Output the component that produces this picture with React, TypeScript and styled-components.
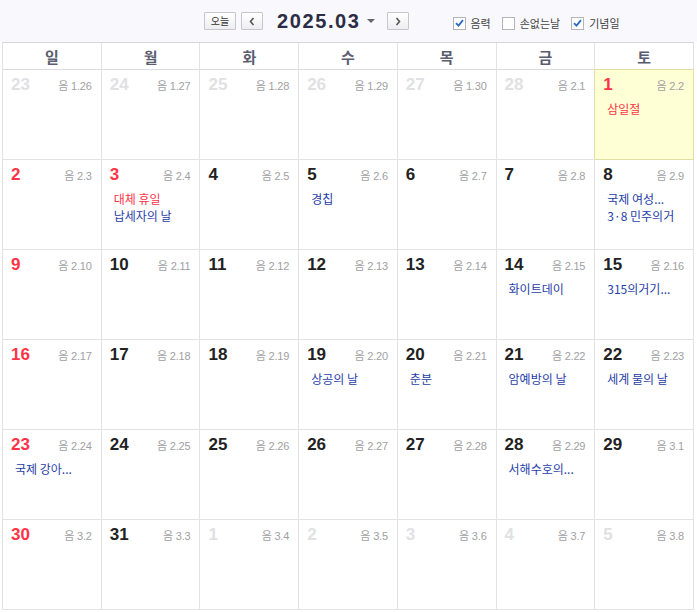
import React from "react";
import styled, { createGlobalStyle } from "styled-components";

const Global = createGlobalStyle`
  html, body { margin: 0; padding: 0; background: #fff; }
  body { font-family: "Liberation Sans", "Noto Sans CJK KR", sans-serif; }
`;

const Page = styled.div`
  width: 697px;
  height: 612px;
  background: #fff;
  display: flex;
  flex-direction: column;
`;

const Toolbar = styled.div`
  height: 42px;
  background: #f9f8fc;
  display: flex;
  align-items: center;
  padding-left: 204px;
  box-sizing: border-box;
`;

const NavGroup = styled.div`
  display: flex;
  align-items: center;
`;

const SmallButton = styled.button<{ $w: number; $ml?: number }>`
  width: ${(p) => p.$w}px;
  height: 18px;
  margin-left: ${(p) => p.$ml ?? 0}px;
  padding: 0;
  border: 1px solid #c6c6cc;
  border-radius: 1px;
  background: linear-gradient(#ffffff, #eeeef1);
  color: #333;
  font-family: "Noto Sans CJK KR", sans-serif;
  font-size: 10px;
  line-height: 16px;
  display: flex;
  align-items: center;
  justify-content: center;
  box-sizing: border-box;
`;

const Title = styled.div`
  margin-left: 14px;
  font-family: "Liberation Sans", sans-serif;
  font-weight: 700;
  font-size: 20px;
  letter-spacing: 1.6px;
  color: #2a2d44;
  display: flex;
  align-items: center;
`;

const Caret = styled.span`
  margin-left: 6px;
  margin-right: 12px;
  width: 0;
  height: 0;
  border-left: 4px solid transparent;
  border-right: 4px solid transparent;
  border-top: 4px solid #666;
`;

const CheckGroup = styled.div`
  display: flex;
  align-items: center;
  margin-left: 44px;
  margin-top: 4px;
`;

const CheckItem = styled.label`
  display: flex;
  align-items: center;
  margin-right: 11px;
  font-family: "Noto Sans CJK KR", sans-serif;
  font-size: 11px;
  color: #444;
`;

const Box = styled.span`
  width: 13px;
  height: 13px;
  box-sizing: border-box;
  border: 1px solid #b4b4ba;
  background: #fff;
  margin-right: 5px;
  display: flex;
  align-items: center;
  justify-content: center;
`;

const Calendar = styled.div`
  margin: 0 3px 0 2px;
  border-left: 1px solid #e3e3e6;
  border-top: 1px solid #d6d6db;
  display: grid;
  grid-template-columns: repeat(7, 1fr);
  grid-template-rows: 27px repeat(6, 90px);
  gap: 0;
`;

const HeadCell = styled.div`
  border-right: 1px solid #e3e3e6;
  border-bottom: 1px solid #dcdce0;
  display: flex;
  align-items: center;
  justify-content: center;
  font-family: "Noto Sans CJK KR", sans-serif;
  font-weight: 700;
  font-size: 15px;
  color: #5a5d6f;
`;

const DayCell = styled.div<{ $hl?: boolean }>`
  position: relative;
  border-right: 1px solid ${(p) => (p.$hl ? "#e2dea4" : "#e3e3e6")};
  border-bottom: 1px solid ${(p) => (p.$hl ? "#e2dea4" : "#e3e3e6")};
  background: ${(p) => (p.$hl ? "#ffffd6" : "#fff")};
  box-shadow: ${(p) => (p.$hl ? "-1px -1px 0 0 #e2dea4" : "none")};
  padding: 5px 9px 0 8px;
  display: flex;
  flex-direction: column;
  min-width: 0;
`;

const TopLine = styled.div`
  display: flex;
  justify-content: space-between;
  align-items: center;
  height: 20px;
`;

const DayNum = styled.span<{ $tone: "red" | "dim" | "normal" }>`
  font-family: "Liberation Sans", sans-serif;
  font-weight: 700;
  font-size: 17px;
  color: ${(p) => (p.$tone === "red" ? "#ff3347" : p.$tone === "dim" ? "#e1e1e3" : "#222")};
`;

const Lunar = styled.span`
  font-family: "Liberation Sans", "Noto Sans CJK KR", sans-serif;
  font-size: 11px;
  color: #a0a0a4;
  letter-spacing: -0.2px;
`;

const Events = styled.div`
  margin-top: 5px;
  padding-left: 4px;
  display: flex;
  flex-direction: column;
`;

const EventText = styled.div<{ $red?: boolean }>`
  font-family: "Noto Sans CJK KR", sans-serif;
  font-size: 12px;
  line-height: 17px;
  white-space: nowrap;
  color: ${(p) => (p.$red ? "#ff3347" : "#1f3ea8")};
`;

type Ev = { t: string; red?: boolean };
type Day = { d: number; l: string; tone: "red" | "dim" | "normal"; ev?: Ev[]; hl?: boolean };

const R = "red" as const;
const D = "dim" as const;
const N = "normal" as const;

const days: Day[] = [
  { d: 23, l: "1.26", tone: D },
  { d: 24, l: "1.27", tone: D },
  { d: 25, l: "1.28", tone: D },
  { d: 26, l: "1.29", tone: D },
  { d: 27, l: "1.30", tone: D },
  { d: 28, l: "2.1", tone: D },
  { d: 1, l: "2.2", tone: R, hl: true, ev: [{ t: "삼일절", red: true }] },

  { d: 2, l: "2.3", tone: R },
  { d: 3, l: "2.4", tone: R, ev: [{ t: "대체 휴일", red: true }, { t: "납세자의 날" }] },
  { d: 4, l: "2.5", tone: N },
  { d: 5, l: "2.6", tone: N, ev: [{ t: "경칩" }] },
  { d: 6, l: "2.7", tone: N },
  { d: 7, l: "2.8", tone: N },
  { d: 8, l: "2.9", tone: N, ev: [{ t: "국제 여성..." }, { t: "3·8 민주의거" }] },

  { d: 9, l: "2.10", tone: R },
  { d: 10, l: "2.11", tone: N },
  { d: 11, l: "2.12", tone: N },
  { d: 12, l: "2.13", tone: N },
  { d: 13, l: "2.14", tone: N },
  { d: 14, l: "2.15", tone: N, ev: [{ t: "화이트데이" }] },
  { d: 15, l: "2.16", tone: N, ev: [{ t: "315의거기..." }] },

  { d: 16, l: "2.17", tone: R },
  { d: 17, l: "2.18", tone: N },
  { d: 18, l: "2.19", tone: N },
  { d: 19, l: "2.20", tone: N, ev: [{ t: "상공의 날" }] },
  { d: 20, l: "2.21", tone: N, ev: [{ t: "춘분" }] },
  { d: 21, l: "2.22", tone: N, ev: [{ t: "암예방의 날" }] },
  { d: 22, l: "2.23", tone: N, ev: [{ t: "세계 물의 날" }] },

  { d: 23, l: "2.24", tone: R, ev: [{ t: "국제 강아..." }] },
  { d: 24, l: "2.25", tone: N },
  { d: 25, l: "2.26", tone: N },
  { d: 26, l: "2.27", tone: N },
  { d: 27, l: "2.28", tone: N },
  { d: 28, l: "2.29", tone: N, ev: [{ t: "서해수호의..." }] },
  { d: 29, l: "3.1", tone: N },

  { d: 30, l: "3.2", tone: R },
  { d: 31, l: "3.3", tone: N },
  { d: 1, l: "3.4", tone: D },
  { d: 2, l: "3.5", tone: D },
  { d: 3, l: "3.6", tone: D },
  { d: 4, l: "3.7", tone: D },
  { d: 5, l: "3.8", tone: D },
];

const weekdays = ["일", "월", "화", "수", "목", "금", "토"];

const Check = () => (
  <svg width="9" height="8" viewBox="0 0 9 8">
    <path d="M1 4.2 L3.5 6.6 L8 1.2" fill="none" stroke="#2b6cc4" strokeWidth="1.8" />
  </svg>
);

const Chevron = ({ dir }: { dir: "l" | "r" }) => (
  <svg width="6" height="9" viewBox="0 0 6 9">
    <path
      d={dir === "l" ? "M4.5 1 L1.5 4.5 L4.5 8" : "M1.5 1 L4.5 4.5 L1.5 8"}
      fill="none"
      stroke="#555"
      strokeWidth="1.6"
    />
  </svg>
);

export default function App() {
  return (
    <>
      <Global />
      <Page>
        <Toolbar>
          <NavGroup>
            <SmallButton $w={32}>오늘</SmallButton>
            <SmallButton $w={22} $ml={5}>
              <Chevron dir="l" />
            </SmallButton>
            <Title>2025.03</Title>
            <Caret />
            <SmallButton $w={22}>
              <Chevron dir="r" />
            </SmallButton>
          </NavGroup>
          <CheckGroup>
            <CheckItem>
              <Box>
                <Check />
              </Box>
              음력
            </CheckItem>
            <CheckItem>
              <Box />
              손없는날
            </CheckItem>
            <CheckItem>
              <Box>
                <Check />
              </Box>
              기념일
            </CheckItem>
          </CheckGroup>
        </Toolbar>
        <Calendar>
          {weekdays.map((w) => (
            <HeadCell key={w}>{w}</HeadCell>
          ))}
          {days.map((day, i) => (
            <DayCell key={i} $hl={day.hl}>
              <TopLine>
                <DayNum $tone={day.tone}>{day.d}</DayNum>
                <Lunar>음 {day.l}</Lunar>
              </TopLine>
              {day.ev && (
                <Events>
                  {day.ev.map((e, j) => (
                    <EventText key={j} $red={e.red}>
                      {e.t}
                    </EventText>
                  ))}
                </Events>
              )}
            </DayCell>
          ))}
        </Calendar>
      </Page>
    </>
  );
}
